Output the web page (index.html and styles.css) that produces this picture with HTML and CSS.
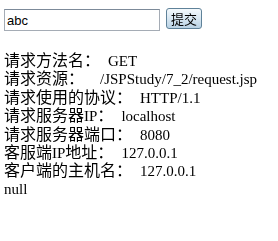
FILE: index.html
```html
<!DOCTYPE html>
<html lang="zh">
<head>
<meta charset="utf-8">
<title>request</title>
<link rel="stylesheet" href="styles.css">
</head>
<body>
<form class="frm" action="request.jsp" method="get">
	<input class="txt" type="text" name="name" value="abc" autofocus>
	<button class="btn" type="submit">提交</button>
</form>
<div class="info">
	请求方法名：&nbsp;&nbsp;<span class="v">GET</span><br>
	请求资源：&nbsp;&nbsp;&nbsp;&nbsp;<span class="v">/JSPStudy/7_2/request.jsp</span><br>
	请求使用的协议：&nbsp;&nbsp;<span class="v">HTTP/1.1</span><br>
	请求服务器<span class="v">IP</span>：&nbsp;&nbsp;<span class="v">localhost</span><br>
	请求服务器端口：&nbsp;&nbsp;<span class="v">8080</span><br>
	客服端<span class="v">IP</span>地址：&nbsp;&nbsp;<span class="v">127.0.0.1</span><br>
	客户端的主机名：&nbsp;&nbsp;<span class="v">127.0.0.1</span>
</div>
<div class="nul">null</div>
</body>
</html>
```
FILE: styles.css
```css
body {margin:0; padding:0 4px; background:#fff; color:#000;
	font:16px/18.4px "Liberation Serif", "Noto Sans CJK SC", serif;}
.frm {margin:0; padding-top:8px; height:24px; display:flex; align-items:flex-start;}
.txt {
	box-sizing:border-box; width:156px; height:22px; margin:1px 0 0 0; padding:0 2px;
	border:1px solid #a5acb5; border-top-color:#7c8a99;
	font:13px "Liberation Sans", Arial, sans-serif; color:#000; outline:none;
	caret-color:#000;
}
.btn {
	box-sizing:border-box; width:36px; height:21px; margin:0 0 0 6px; padding:0;
	border:1px solid #5f8299; border-radius:3px;
	background:linear-gradient(#f4f9fc, #dbe9f3 45%, #b9d2e4);
	font:13px/19px "Noto Sans CJK SC", sans-serif; color:#000;
}
.info {margin-top:20px;}
.v {font-size:15px;}
.nul {font-size:15px; line-height:14px; margin-top:1px;}
```
